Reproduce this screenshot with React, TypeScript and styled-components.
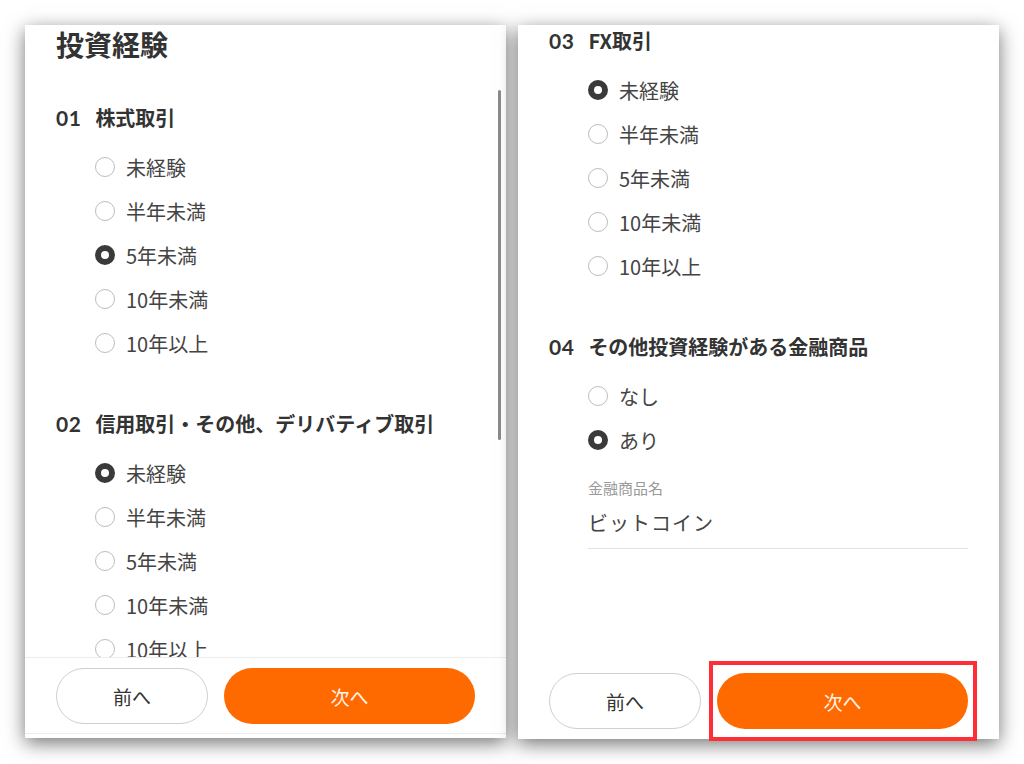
import React from 'react';
import styled, { createGlobalStyle } from 'styled-components';

const GlobalStyle = createGlobalStyle`
    body {
        margin: 0;
        background: #fff;
        font-family: "Noto Sans CJK JP", "Noto Sans", sans-serif;
        color: #333;
    }
`;

type Question = {
    no: string;
    title: string;
    options: string[];
    checked: number;
};

const YEARS = ['未経験', '半年未満', '5年未満', '10年未満', '10年以上'];

const LEFT: Question[] = [
    { no: '01', title: '株式取引', options: YEARS, checked: 2 },
    { no: '02', title: '信用取引・その他、デリバティブ取引', options: YEARS, checked: 0 },
];

const FX: Question = { no: '03', title: 'FX取引', options: YEARS, checked: 0 };
const OTHER: Question = { no: '04', title: 'その他投資経験がある金融商品', options: ['なし', 'あり'], checked: 1 };

function QuestionBlock(props: { q: Question }) {
    const { q } = props;
    return (
        <Section>
            <Heading>
                <No>{q.no}</No>
                {q.title}
            </Heading>
            <Options>
                {q.options.map((o, i) => (
                    <Option key={o}>
                        <Radio checked={i === q.checked} />
                        {o}
                    </Option>
                ))}
            </Options>
        </Section>
    );
}

function Footer(props: { bordered?: boolean; highlight?: boolean }) {
    return (
        <FooterBar bordered={props.bordered}>
            <PrevBtn>前へ</PrevBtn>
            <NextWrap>
                <NextBtn>次へ</NextBtn>
                {props.highlight && <Highlight />}
            </NextWrap>
        </FooterBar>
    );
}

function App() {
    return (
        <Page>
            <GlobalStyle />
            <Phone>
                <Content>
                    <Title>投資経験</Title>
                    {LEFT.map((q) => (
                        <QuestionBlock key={q.no} q={q} />
                    ))}
                </Content>
                <ScrollThumb />
                <Footer bordered />
            </Phone>
            <Phone tall>
                <Content top={1}>
                    <QuestionBlock q={FX} />
                    <QuestionBlock q={OTHER} />
                    <Field>
                        <FieldLabel>金融商品名</FieldLabel>
                        <FieldValue>ビットコイン</FieldValue>
                    </Field>
                </Content>
                <Footer highlight />
            </Phone>
        </Page>
    );
}

const Page = styled.div`
    display: flex;
    gap: 12px;
    padding: 25px 0 0 25px;
    height: 764px;
    box-sizing: border-box;
`;

const Phone = styled.div<{ tall?: boolean }>`
    position: relative;
    width: 481px;
    height: ${(p) => (p.tall ? 714 : 713)}px;
    background: #fff;
    display: flex;
    flex-direction: column;
    box-shadow: 0 5px 18px rgba(0, 0, 0, 0.55);
    padding-bottom: ${(p) => (p.tall ? 0 : 4)}px;
    box-sizing: border-box;
`;

const Content = styled.div<{ top?: number }>`
    flex: 1;
    overflow: hidden;
    padding: ${(p) => p.top ?? 0}px 31px 0 31px;
`;

const Title = styled.div`
    font-size: 28px;
    line-height: 38px;
    font-weight: bold;
    color: #333;
    margin-bottom: 40px;
`;

const Section = styled.div`
    & + & {
        margin-top: 44px;
    }
`;

const Heading = styled.div`
    font-size: 20px;
    line-height: 30px;
    font-weight: bold;
    color: #333;
    display: flex;
    align-items: center;
`;

const No = styled.span`
    font-family: "Lato", "Noto Sans CJK JP", sans-serif;
    font-size: 21px;
    margin-right: 14px;
    letter-spacing: 0.5px;
`;

const Options = styled.div`
    margin-top: 12px;
    padding-left: 39px;
`;

const Option = styled.div`
    height: 44px;
    display: flex;
    align-items: center;
    font-size: 20px;
    color: #444;
`;

const Radio = styled.span<{ checked?: boolean }>`
    width: 20px;
    height: 20px;
    border-radius: 50%;
    box-sizing: border-box;
    margin-right: 11px;
    flex-shrink: 0;
    border: ${(p) => (p.checked ? '6.5px solid #3a3a3a' : '1.5px solid #bdbdbd')};
    background: #fff;
`;

const Field = styled.div`
    margin: 16px 0 0 39px;
    border-bottom: 1px solid #e2e2e2;
    padding-bottom: 10px;
`;

const FieldLabel = styled.div`
    font-size: 15px;
    line-height: 20px;
    color: #999;
`;

const FieldValue = styled.div`
    margin-top: 10px;
    font-size: 20px;
    line-height: 30px;
    color: #444;
    letter-spacing: 1px;
`;

const ScrollThumb = styled.div`
    position: absolute;
    right: 5px;
    top: 65px;
    width: 3px;
    height: 350px;
    border-radius: 2px;
    background: #8a8a8a;
`;

const FooterBar = styled.div<{ bordered?: boolean }>`
    display: flex;
    gap: 16px;
    padding: 10px 31px ${(p) => (p.bordered ? 9 : 10)}px 31px;
    border-top: ${(p) => (p.bordered ? '1px solid #ececec' : 'none')};
    border-bottom: ${(p) => (p.bordered ? '1px solid #ececec' : 'none')};
`;

const PrevBtn = styled.button`
    width: 152px;
    height: 56px;
    border-radius: 28px;
    border: 1px solid #cfcfcf;
    background: #fff;
    font-family: inherit;
    font-size: 19px;
    color: #333;
`;

const NextWrap = styled.div`
    position: relative;
    flex: 1;
`;

const NextBtn = styled.button`
    width: 100%;
    height: 56px;
    border-radius: 28px;
    border: 0;
    background: #ff6a00;
    font-family: inherit;
    font-size: 19px;
    color: #fff4ea;
`;

const Highlight = styled.div`
    position: absolute;
    top: -12px;
    bottom: -12px;
    left: -8px;
    right: -9px;
    border: 4px solid #ff2e36;
`;

export default App;
